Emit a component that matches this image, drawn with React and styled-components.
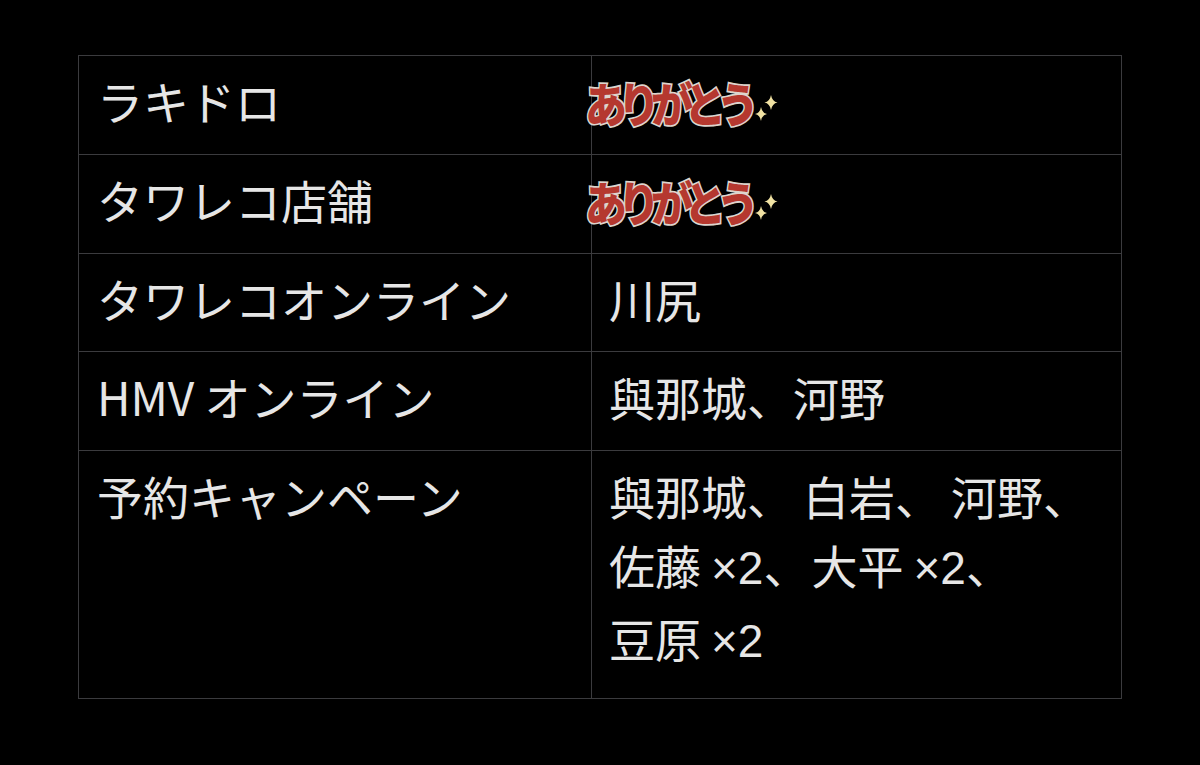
import React from "react";
import styled, { createGlobalStyle } from "styled-components";

const GlobalStyle = createGlobalStyle`
  html, body {
    margin: 0;
    padding: 0;
    background: #000;
  }
  body {
    font-family: "Noto Sans CJK JP", "Noto Sans", sans-serif;
  }
`;

const Page = styled.div`
  width: 1200px;
  height: 765px;
  box-sizing: border-box;
  padding: 55px 78px 0 78px;
  background: #000;
  overflow: hidden;
`;

const Table = styled.table`
  width: 1044px;
  border-collapse: collapse;
  table-layout: fixed;
  color: #e6e6e6;
  font-size: 46px;
  line-height: 69px;
`;

const Row = styled.tr`
  height: ${(p) => p.$h}px;
`;

const Cell = styled.td`
  border: 1px solid #3b3b3e;
  vertical-align: top;
  padding: 10px 0 0 ${(p) => p.$pl}px;
  box-sizing: border-box;
  white-space: nowrap;
`;

const Sticker = styled.span`
  display: inline-flex;
  align-items: center;
  margin-left: -24px;
  margin-top: 4px;
`;

const StickerText = styled.span`
  display: inline-block;
  font-family: "Noto Sans CJK JP", sans-serif;
  font-weight: 900;
  font-size: 42px;
  line-height: 48px;
  letter-spacing: -9px;
  color: #b5382f;
  -webkit-text-stroke: 3px #ddd5ce;
  paint-order: stroke fill;
  transform: scaleY(1.12);
`;

const Times = styled.span`
  font-family: "Liberation Sans", "Noto Sans", sans-serif;
  font-size: 46px;
  margin-left: 10px;
`;

const Comma = styled.span`
  margin-right: ${(p) => p.$gap || 0}px;
`;

function Sparkle() {
  return (
    <svg width="26" height="32" viewBox="0 0 26 32" style={{ marginLeft: 4, marginTop: 12 }}>
      <path
        d="M17 3 Q18.2 9.5 23.5 10.5 Q18.2 11.5 17 18 Q15.8 11.5 10.5 10.5 Q15.8 9.5 17 3 Z"
        fill="#f1e2a3"
      />
      <path
        d="M7 15 Q8 21 13 22 Q8 23 7 29 Q6 23 1 22 Q6 21 7 15 Z"
        fill="#f1e2a3"
      />
    </svg>
  );
}

function Thanks() {
  return (
    <Sticker>
      <StickerText>ありがとう</StickerText>
      <Sparkle />
    </Sticker>
  );
}

const rows = [
  { label: "ラキドロ", value: <Thanks />, h: 99 },
  { label: "タワレコ店舗", value: <Thanks />, h: 99 },
  { label: "タワレコオンライン", value: "川尻", h: 98 },
  { label: "HMV オンライン", value: "與那城、河野", h: 99 },
  {
    label: "予約キャンペーン",
    value: (
      <>
        與那城<Comma $gap={10}>、</Comma>白岩<Comma $gap={10}>、</Comma>河野、
        <br />
        佐藤<Times>×2</Times>
        <Comma $gap={2}>、</Comma>大平<Times>×2</Times>、
        <br />
        豆原<Times>×2</Times>
      </>
    ),
    h: 248,
  },
];

export default function App() {
  return (
    <>
      <GlobalStyle />
      <Page>
        <Table>
          <colgroup>
            <col style={{ width: 513 }} />
            <col />
          </colgroup>
          <tbody>
            {rows.map((r) => (
              <Row key={r.label} $h={r.h}>
                <Cell $pl={18}>{r.label}</Cell>
                <Cell $pl={17}>{r.value}</Cell>
              </Row>
            ))}
          </tbody>
        </Table>
      </Page>
    </>
  );
}
